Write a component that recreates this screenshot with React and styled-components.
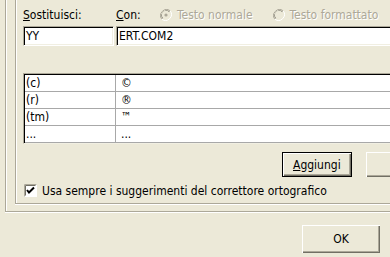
import React from "react";
import styled, { createGlobalStyle } from "styled-components";

const GlobalStyle = createGlobalStyle`
  html, body {
    margin: 0;
    padding: 0;
    background: #ece9d8;
    overflow: hidden;
  }
  body {
    width: 390px;
    height: 257px;
    font-family: "DejaVu Sans Condensed", "DejaVu Sans", Tahoma, sans-serif;
    font-size: 12px;
    color: #000;
  }
`;

const Window = styled.div`
  width: 390px;
  height: 257px;
  overflow: hidden;
`;

const TabPage = styled.div`
  width: 420px;
  margin-left: 5px;
  padding: 0 0 7px 9px;
  border-left: 1px solid #aca899;
  border-bottom: 1px solid #aca899;
  box-shadow: inset 1px 0 #fff, 0 1px #fff;
`;

const GroupBox = styled.div`
  padding: 8px 0 6px 7px;
  border-left: 1px solid #aca899;
  border-bottom: 1px solid #aca899;
  box-shadow: inset 1px 0 #fff, 0 1px #fff;
`;

const LabelRow = styled.div`
  display: flex;
  align-items: center;
  height: 14px;
`;

const Label = styled.span`
  width: ${(p) => p.$width || "auto"};
  flex: none;
  line-height: 14px;
  u { text-decoration: underline; }
`;

const Radio = styled.label`
  display: flex;
  align-items: center;
  gap: 5px;
  margin-right: ${(p) => p.$gap || 0}px;
  color: #aca899;
  text-shadow: 1px 1px 0 #fff;
`;

const InputRow = styled.div`
  display: flex;
  margin-top: 4px;
  gap: 2px;
`;

const TextField = styled.div`
  box-sizing: border-box;
  height: 20px;
  width: ${(p) => (p.$width ? p.$width + "px" : "auto")};
  flex: ${(p) => (p.$width ? "none" : 1)};
  background: #fff;
  border-top: 1px solid #aca899;
  border-left: 1px solid #aca899;
  border-bottom: 1px solid #fff;
  border-right: 1px solid #fff;
  box-shadow: inset 1px 1px 0 #000, inset -1px -1px 0 #f1efe2;
  padding: 0 2px;
  line-height: 18px;
`;

const Table = styled.div`
  margin-top: 27px;
  background: #fff;
  border-top: 1px solid #aca899;
  border-left: 1px solid #aca899;
  border-bottom: 1px solid #f1efe2;
  box-shadow: inset 1px 1px 0 #000;
  padding: 1px 0 0 1px;
`;

const Row = styled.div`
  display: grid;
  grid-template-columns: 91px 1fr;
  height: 17px;
  border-bottom: 1px solid #a8a8a8;
  box-sizing: border-box;
`;

const Cell = styled.div`
  padding-left: ${(p) => p.$pad}px;
  line-height: 16px;
  border-right: ${(p) => (p.$divider ? "1px solid #a8a8a8" : "none")};
`;

const ButtonRow = styled.div`
  display: flex;
  gap: 14px;
  margin-top: 8px;
  margin-left: 259px;
`;

const Button = styled.button`
  box-sizing: border-box;
  width: ${(p) => p.$width}px;
  height: ${(p) => p.$height}px;
  background: #ece9d8;
  font: inherit;
  color: #000;
  padding: 0;
  border: ${(p) => (p.$default ? "1px solid #000" : "none")};
  box-shadow: inset 1px 1px 0 #fff, inset -1px -1px 0 #716f64,
    inset -2px -2px 0 #aca899;
  u { text-decoration: underline; }
`;

const CheckRow = styled.label`
  display: flex;
  align-items: center;
  gap: 5px;
  margin-top: 7px;
  height: 13px;
  margin-left: 1px;
`;

const Footer = styled.div`
  display: flex;
  justify-content: flex-end;
  padding: 13px 10px 0 0;
`;

function RadioIcon({ checked }) {
  return (
    <svg width="12" height="12" viewBox="0 0 12 12">
      <path d="M10.2 1.8 A6 6 0 0 0 1.8 10.2" fill="none" stroke="#aca899" strokeWidth="1" />
      <path d="M9.4 2.6 A4.9 4.9 0 0 0 2.6 9.4" fill="none" stroke="#716f64" strokeWidth="1" />
      <path d="M1.8 10.2 A6 6 0 0 0 10.2 1.8" fill="none" stroke="#fff" strokeWidth="1" />
      <circle cx="6" cy="6" r="4.2" fill="#ece9d8" />
      {checked && <circle cx="6" cy="6" r="1.6" fill="#aca899" />}
    </svg>
  );
}

function CheckIcon() {
  return (
    <svg width="13" height="13" viewBox="0 0 13 13">
      <rect x="0" y="0" width="13" height="13" fill="#fff" />
      <path d="M0.5 12.5 V0.5 H12.5" fill="none" stroke="#aca899" />
      <path d="M1.5 11.5 V1.5 H11.5" fill="none" stroke="#716f64" />
      <path d="M3 6 L5 8.5 L10 3.5" fill="none" stroke="#000" strokeWidth="2" />
    </svg>
  );
}

const rows = [
  ["(c)", "©"],
  ["(r)", "®"],
  ["(tm)", "™"],
  ["...", "..."],
];

export default function App() {
  return (
    <Window>
      <GlobalStyle />
      <TabPage>
        <GroupBox>
          <LabelRow>
            <Label $width="93px"><u>S</u>ostituisci:</Label>
            <Label $width="44px"><u>C</u>on:</Label>
            <Radio $gap={20}>
              <RadioIcon checked />
              Testo normale
            </Radio>
            <Radio>
              <RadioIcon />
              Testo formattato
            </Radio>
          </LabelRow>
          <InputRow>
            <TextField $width={91}>YY</TextField>
            <TextField>ERT.COM2</TextField>
          </InputRow>
          <Table>
            {rows.map(([from, to]) => (
              <Row key={from}>
                <Cell $pad={1} $divider>{from}</Cell>
                <Cell $pad={5}>{to}</Cell>
              </Row>
            ))}
          </Table>
          <ButtonRow>
            <Button $width={80} $height={25} $default>
              <u>A</u>ggiungi
            </Button>
            <Button $width={80} $height={25} />
          </ButtonRow>
          <CheckRow>
            <CheckIcon />
            Usa sempre i suggerimenti del correttore ortografico
          </CheckRow>
        </GroupBox>
      </TabPage>
      <Footer>
        <Button $width={78} $height={28}>OK</Button>
      </Footer>
    </Window>
  );
}
